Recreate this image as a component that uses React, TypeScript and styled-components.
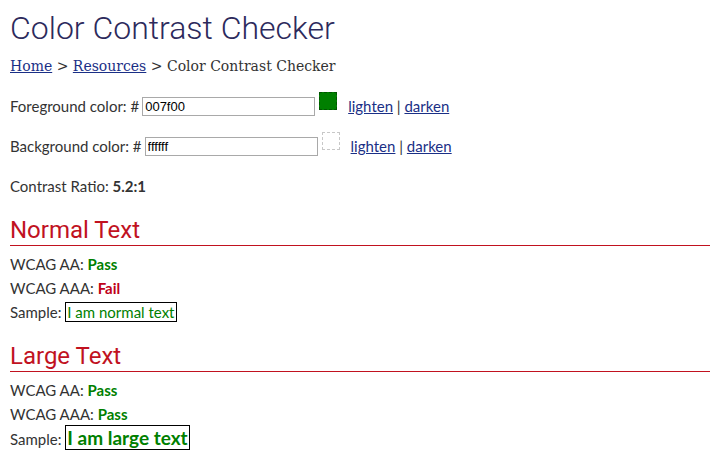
import styled, { createGlobalStyle } from 'styled-components';

const GlobalStyle = createGlobalStyle`
  body {
    margin: 0;
    background: #fff;
    font-family: Lato, "Liberation Sans", sans-serif;
    font-size: 15px;
    color: #333;
  }
`;

const Page = styled.div`
  padding: 8px 7px 0 10px;
`;

const Title = styled.h1`
  margin: 0;
  font-family: Roboto, sans-serif;
  font-weight: 300;
  font-size: 32px;
  line-height: 40px;
  color: #2c2a5c;
`;

const Breadcrumb = styled.nav`
  margin-top: 8px;
  padding-bottom: 2px;
  font-family: "DejaVu Serif", serif;
  font-size: 14px;
  line-height: 20px;
  color: #333;

  a {
    color: #1a2f86;
  }
`;

const FieldRow = styled.div`
  display: flex;
  align-items: center;
  height: 24px;
  margin-top: 16px;
`;

const FieldLabel = styled.span`
  margin-right: 3px;
`;

const HexInput = styled.input`
  box-sizing: border-box;
  width: 173px;
  height: 19px;
  padding: 0 2px;
  border: 1px solid #a9a9a9;
  font-family: "Liberation Sans", Arial, sans-serif;
  font-size: 13px;
  color: #000;
  outline: none;
`;

const Swatch = styled.span<{ $fill: string; $edge: string }>`
  box-sizing: border-box;
  align-self: flex-start;
  width: 18px;
  height: 18px;
  margin: -2px 0 0 4px;
  background: ${({ $fill }) => $fill};
  border: 1px dashed ${({ $edge }) => $edge};
`;

const Adjust = styled.span`
  margin-left: 11px;
  color: #333;

  a {
    color: #1a2f86;
  }
`;

const Ratio = styled.p`
  margin: 16px 0 0;
  line-height: 24px;
`;

const Section = styled.section`
  margin-top: 17px;
`;

const Heading = styled.h2`
  margin: 0 0 6px;
  font-family: Roboto, sans-serif;
  font-weight: 400;
  font-size: 24px;
  line-height: 30px;
  color: #c1121f;
  border-bottom: 1px solid #c1121f;
`;

const Line = styled.p`
  margin: 0;
  line-height: 24px;
`;

const Verdict = styled.strong<{ $pass: boolean }>`
  color: ${({ $pass }) => ($pass ? '#007f00' : '#c00018')};
`;

const SampleBox = styled.span<{ $large?: boolean }>`
  padding: 0 1px;
  border: 1px solid #000;
  color: #007f00;
  font-size: ${({ $large }) => ($large ? '19px' : '15px')};
  font-weight: ${({ $large }) => ($large ? 700 : 400)};
`;

const results = [
  { title: 'Normal Text', aa: true, aaa: false, large: false, sample: 'I am normal text' },
  { title: 'Large Text', aa: true, aaa: true, large: true, sample: 'I am large text' },
];

export default function App() {
  return (
    <>
      <GlobalStyle />
      <Page>
        <Title>Color Contrast Checker</Title>
        <Breadcrumb>
          <a href="#">Home</a> &gt; <a href="#">Resources</a> &gt; Color Contrast Checker
        </Breadcrumb>

        <FieldRow>
          <FieldLabel>Foreground color: #</FieldLabel>
          <HexInput defaultValue="007f00" />
          <Swatch $fill="#007f00" $edge="#005500" />
          <Adjust>
            <a href="#">lighten</a> | <a href="#">darken</a>
          </Adjust>
        </FieldRow>

        <FieldRow>
          <FieldLabel>Background color: #</FieldLabel>
          <HexInput defaultValue="ffffff" />
          <Swatch $fill="#ffffff" $edge="#c8c8c8" />
          <Adjust>
            <a href="#">lighten</a> | <a href="#">darken</a>
          </Adjust>
        </FieldRow>

        <Ratio>
          Contrast Ratio: <strong>5.2:1</strong>
        </Ratio>

        {results.map((r) => (
          <Section key={r.title}>
            <Heading>{r.title}</Heading>
            <Line>
              WCAG AA: <Verdict $pass={r.aa}>{r.aa ? 'Pass' : 'Fail'}</Verdict>
            </Line>
            <Line>
              WCAG AAA: <Verdict $pass={r.aaa}>{r.aaa ? 'Pass' : 'Fail'}</Verdict>
            </Line>
            <Line>
              Sample: <SampleBox $large={r.large}>{r.sample}</SampleBox>
            </Line>
          </Section>
        ))}
      </Page>
    </>
  );
}
